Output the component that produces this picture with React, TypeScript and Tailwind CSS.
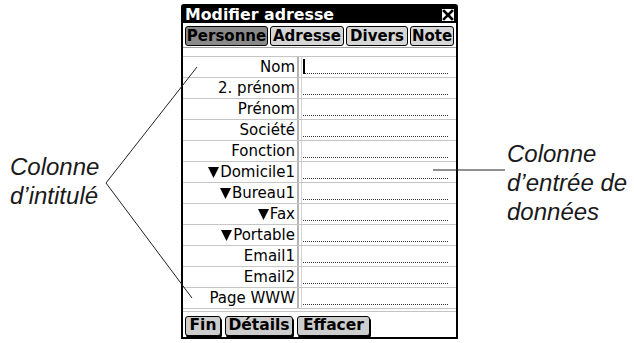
import React from "react";

const rows = [
  { label: "Nom" },
  { label: "2. prénom" },
  { label: "Prénom" },
  { label: "Société" },
  { label: "Fonction" },
  { label: "Domicile1", arrow: true },
  { label: "Bureau1", arrow: true },
  { label: "Fax", arrow: true },
  { label: "Portable", arrow: true },
  { label: "Email1" },
  { label: "Email2" },
  { label: "Page WWW" },
];

const tabs = [
  { name: "Personne", w: "w-[83px]", active: true },
  { name: "Adresse", w: "w-[74px]" },
  { name: "Divers", w: "w-[62px]" },
  { name: "Note", w: "w-[44px]" },
];

const buttons = [
  { name: "Fin", w: "w-[36px]" },
  { name: "Détails", w: "w-[68px]" },
  { name: "Effacer", w: "w-[73px]" },
];

const pixel = { fontFamily: '"DejaVu Sans", "Liberation Sans", sans-serif' };
const helv = { fontFamily: '"Liberation Sans", Arial, sans-serif' };

function Arrow() {
  return (
    <svg width="11" height="12" viewBox="0 0 11 12" className="mr-[1px]">
      <path d="M0 1 H11 L5.5 12 Z" fill="#000" />
    </svg>
  );
}

function CloseBox() {
  return (
    <svg width="12" height="12" viewBox="0 0 12 12">
      <rect x="0" y="0" width="12" height="12" fill="#fff" />
      <path d="M2 2 L10 10 M10 2 L2 10" stroke="#000" strokeWidth="2.6" strokeLinecap="square" />
    </svg>
  );
}

export default function App() {
  return (
    <div className="relative w-[634px] h-[343px] bg-white overflow-hidden flex">
      <div className="w-[181px] shrink-0 pt-[152px] pl-[10px] text-[24px] leading-[29px] italic text-[#1a1a1a]" style={helv}>
        <div>Colonne</div>
        <div>d’intitulé</div>
      </div>

      <div className="w-[277px] shrink-0 mt-[4px] h-[335px] border-2 border-black rounded-t-[3px] flex flex-col bg-white">
        <div className="h-[17px] shrink-0 bg-black flex items-center justify-between pl-[2px] pr-[2px] text-white font-bold text-[15.8px] leading-none" style={pixel}>
          <span>Modifier adresse</span>
          <CloseBox />
        </div>

        <div className="flex gap-[2px] pl-[2px] pt-[3px] pb-[1px] border-b border-[#a0a0a0]">
          {tabs.map((t) => (
            <div
              key={t.name}
              className={
                t.w +
                " h-[20px] flex items-center justify-center border-[1.5px] border-black rounded-[3px] font-bold text-[15px] leading-none " +
                (t.active ? "bg-[#8a8a8a]" : "bg-[#d6d6d6]")
              }
              style={pixel}
            >
              {t.name}
            </div>
          ))}
        </div>

        <div className="flex flex-col mt-[8px] border-b border-[#c6c6c6]">
          {rows.map((r, i) => (
            <div key={r.label} className="h-[21px] flex border-t border-[#c6c6c6]">
              <div className="w-[114px] flex items-center justify-end pr-[2px] text-[15px] leading-none text-black" style={pixel}>
                {r.arrow && <Arrow />}
                <span>{r.label}</span>
              </div>
              <div className="w-[5px] border-l-2 border-[#b4b4b4] border-r border-r-[#d4d4d4]" />
              <div className="flex-1 flex items-end pl-[1px] pr-[8px] pb-[3px] relative">
                {i === 0 && <div className="absolute left-[1px] bottom-[3px] w-[2px] h-[15px] bg-black" />}
                <div className="w-full border-b border-dotted border-[#333]" />
              </div>
            </div>
          ))}
        </div>

        <div className="mt-[2px] h-px bg-[#c6c6c6]" />

        <div className="flex gap-[4px] pl-[2px] pt-[4px]">
          {buttons.map((b) => (
            <div
              key={b.name}
              className={
                b.w +
                " h-[20px] flex items-center justify-center bg-[#cdcdcd] border-[1.5px] border-black rounded-[3px] shadow-[1px_2px_0_#000] font-bold text-[15.5px] leading-none"
              }
              style={pixel}
            >
              {b.name}
            </div>
          ))}
        </div>
      </div>

      <div className="flex-1 pt-[139px] pl-[49px] text-[24px] leading-[29px] italic text-[#1a1a1a]" style={helv}>
        <div>Colonne</div>
        <div>d’entrée de</div>
        <div>données</div>
      </div>

      <svg className="absolute inset-0 pointer-events-none" width="634" height="343">
        <polyline points="197,67 106,183 192,298" fill="none" stroke="#222" strokeWidth="1" />
        <line x1="433" y1="170" x2="505" y2="170" stroke="#222" strokeWidth="1" />
      </svg>
    </div>
  );
}
